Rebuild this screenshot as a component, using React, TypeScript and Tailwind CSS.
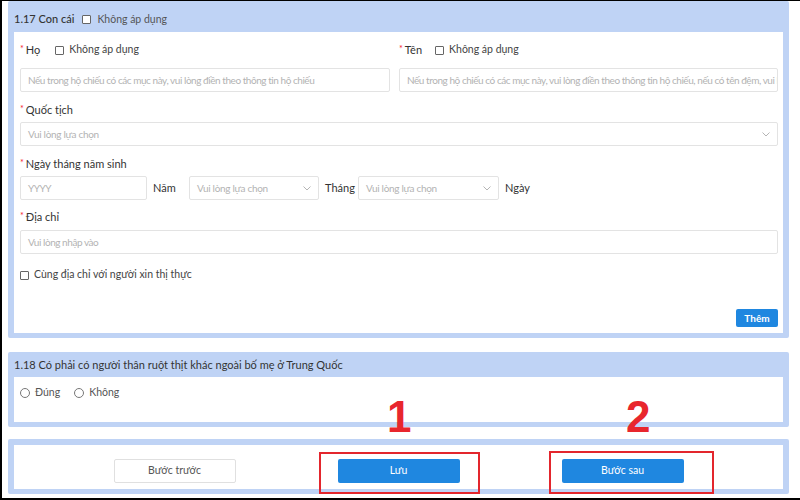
import React from "react";

const Checkbox = () => (
  <span className="inline-block w-[9px] h-[9px] border border-[#666] rounded-[1px] bg-white shrink-0" />
);

const Radio = () => (
  <span className="inline-block w-[10px] h-[10px] border border-[#777] rounded-full bg-white shrink-0" />
);

const Chevron = () => (
  <svg width="8" height="5" viewBox="0 0 8 5" className="shrink-0">
    <path d="M0.5 0.5 L4 4 L7.5 0.5" fill="none" stroke="#b5b5b5" strokeWidth="1" />
  </svg>
);

const Label = ({ text }: { text: string }) => (
  <span className="flex items-center text-[11px] leading-[14px] text-[#333]">
    <span className="text-[#f5222d] text-[9px] mr-[2px] -mt-[3px]">*</span>
    {text}
  </span>
);

const Input = ({ placeholder, className = "" }: { placeholder: string; className?: string }) => (
  <div
    className={`h-[24px] border border-[#e3e3e3] rounded-[2px] bg-white flex items-center px-[7px] text-[10px] tracking-[-0.45px] text-[#b3b3b3] whitespace-nowrap overflow-hidden ${className}`}
  >
    {placeholder}
  </div>
);

const Select = ({ placeholder, className = "" }: { placeholder: string; className?: string }) => (
  <div
    className={`h-[24px] border border-[#e3e3e3] rounded-[2px] bg-white flex items-center justify-between pl-[7px] pr-[7px] text-[10px] tracking-[-0.3px] text-[#b3b3b3] whitespace-nowrap overflow-hidden ${className}`}
  >
    <span>{placeholder}</span>
    <Chevron />
  </div>
);

export default function App() {
  return (
    <div className="relative w-[800px] h-[500px] bg-white border-l-2 border-t border-b-2 border-black overflow-hidden font-['Lato',sans-serif] text-[#333]">
      <div className="pl-[6px] w-[787px]">
        {/* Card 1 */}
        <div className="bg-[#bfd3f5] rounded-[2px] px-[6px] pb-[5px]">
          <div className="h-[31px] pt-[11px] flex items-start gap-[8px] text-[11px] leading-[14px]">
            <span className="text-[#333] font-medium">1.17 Con cái</span>
            <span className="flex items-center gap-[6px] text-[#555] text-[10.5px]">
              <Checkbox />
              Không áp dụng
            </span>
          </div>
          <div className="bg-white pl-[6px] pr-[5px] pt-[11px] pb-[6px]">
            <div className="grid grid-cols-[370px_1fr] gap-x-[9px]">
              <div className="flex items-center h-[14px]">
                <Label text="Họ" />
                <span className="flex items-center gap-[5px] ml-[15px] text-[10.5px] text-[#444]">
                  <Checkbox />
                  Không áp dụng
                </span>
              </div>
              <div className="flex items-center h-[14px]">
                <Label text="Tên" />
                <span className="flex items-center gap-[5px] ml-[13px] text-[10.5px] text-[#444]">
                  <Checkbox />
                  Không áp dụng
                </span>
              </div>
              <Input
                className="mt-[11px]"
                placeholder="Nếu trong hộ chiếu có các mục này, vui lòng điền theo thông tin hộ chiếu"
              />
              <Input
                className="mt-[11px]"
                placeholder="Nếu trong hộ chiếu có các mục này, vui lòng điền theo thông tin hộ chiếu, nếu có tên đệm, vui lòng điền cả tên đệm"
              />
            </div>

            <div className="mt-[11px] h-[14px] flex items-center">
              <Label text="Quốc tịch" />
            </div>
            <Select className="mt-[5px]" placeholder="Vui lòng lựa chọn" />

            <div className="mt-[11px] h-[14px] flex items-center">
              <Label text="Ngày tháng năm sinh" />
            </div>
            <div className="mt-[5px] flex items-center text-[11px] text-[#333]">
              <Input className="w-[127px]" placeholder="YYYY" />
              <span className="ml-[6px] w-[36px]">Năm</span>
              <Select className="w-[130px]" placeholder="Vui lòng lựa chọn" />
              <span className="ml-[6px] w-[33px]">Tháng</span>
              <Select className="w-[141px]" placeholder="Vui lòng lựa chọn" />
              <span className="ml-[6px]">Ngày</span>
            </div>

            <div className="mt-[10px] h-[14px] flex items-center">
              <Label text="Địa chỉ" />
            </div>
            <Input className="mt-[6px]" placeholder="Vui lòng nhập vào" />

            <div className="mt-[14px] h-[14px] flex items-center gap-[5px] text-[10.5px] text-[#444]">
              <Checkbox />
              Cùng địa chỉ với người xin thị thực
            </div>

            <div className="mt-[27px] flex justify-end">
              <div className="h-[18px] w-[42px] bg-[#1f87e0] rounded-[2px] flex items-center justify-center text-white text-[10px] font-bold">
                Thêm
              </div>
            </div>
          </div>
        </div>

        {/* Card 2 */}
        <div className="mt-[14px] bg-[#bfd3f5] rounded-[2px] px-[6px] pb-[5px]">
          <div className="h-[25px] pt-[1px] flex items-center text-[11px] text-[#333]">
            1.18 Có phải có người thân ruột thịt khác ngoài bố mẹ ở Trung Quốc
          </div>
          <div className="bg-white pl-[6px] pt-[9px] h-[45px]">
            <div className="flex items-center h-[14px] text-[10.5px] text-[#555]">
              <span className="flex items-center gap-[5px]">
                <Radio />
                Đúng
              </span>
              <span className="flex items-center gap-[5px] ml-[14px]">
                <Radio />
                Không
              </span>
            </div>
          </div>
        </div>

        {/* Card 3 */}
        <div className="mt-[12px] bg-[#bfd3f5] rounded-[2px] p-[6px] pb-[5px]">
          <div className="bg-white h-[44px] pt-[14px] flex justify-center gap-[102px]">
            <div className="w-[122px] h-[24px] border border-[#e0e0e0] rounded-[2px] flex items-center justify-center text-[10.5px] text-[#555]">
              Bước trước
            </div>
            <div className="w-[122px] h-[24px] bg-[#1f87e0] rounded-[2px] flex items-center justify-center text-[10.5px] text-white">
              Lưu
            </div>
            <div className="w-[122px] h-[24px] bg-[#1f87e0] rounded-[2px] flex items-center justify-center text-[10.5px] text-white">
              Bước sau
            </div>
          </div>
        </div>
      </div>

      {/* Annotations */}
      <div className="absolute left-[317px] top-[451px] w-[161px] h-[42px] border-2 border-[#e3262d]" />
      <div className="absolute left-[547px] top-[450px] w-[165px] h-[43px] border-2 border-[#e3262d]" />
      <div className="absolute left-[385px] top-[392px] text-[44px] leading-[48px] font-bold text-[#e8262d] font-['Liberation_Sans',sans-serif]">
        1
      </div>
      <div className="absolute left-[624px] top-[392px] text-[44px] leading-[48px] font-bold text-[#e8262d] font-['Liberation_Sans',sans-serif]">
        2
      </div>
    </div>
  );
}
